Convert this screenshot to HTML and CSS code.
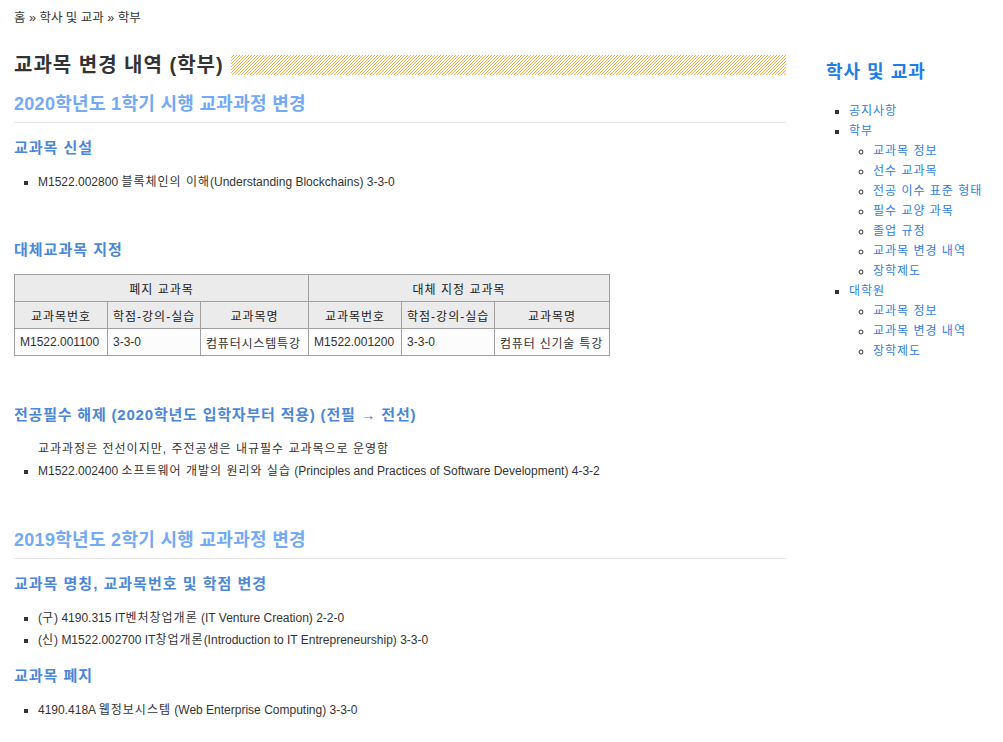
FILE: index.html
```html
<!DOCTYPE html>
<html lang="ko">
<head>
    <meta charset="UTF-8">
    <title>교과목 변경 내역 (학부)</title>
    <link rel="stylesheet" href="styles.css">
</head>
<body>
    <div class="page">
        <div class="main">
            <div class="breadcrumb">홈 &raquo; 학사 및 교과 &raquo; 학부</div>

            <h1 class="page-title"><span>교과목 변경 내역 (학부)</span><span class="stripe"></span></h1>

            <h2 class="term">2020학년도 1학기 시행 교과과정 변경</h2>

            <h3 class="sub">교과목 신설</h3>
            <ul class="items">
                <li>M1522.002800 <span class="ko">블록체인의 이해</span>(Understanding Blockchains) 3-3-0</li>
            </ul>

            <h3 class="sub gap-big">대체교과목 지정</h3>
            <table class="subst">
                <colgroup>
                    <col class="c-no">
                    <col class="c-cr">
                    <col class="c-nm">
                    <col class="c-no">
                    <col class="c-cr">
                    <col class="c-nm2">
                </colgroup>
                <tr>
                    <th colspan="3">폐지 교과목</th>
                    <th colspan="3">대체 지정 교과목</th>
                </tr>
                <tr>
                    <th>교과목번호</th>
                    <th>학점-강의-실습</th>
                    <th>교과목명</th>
                    <th>교과목번호</th>
                    <th>학점-강의-실습</th>
                    <th>교과목명</th>
                </tr>
                <tr>
                    <td>M1522.001100</td>
                    <td>3-3-0</td>
                    <td class="ko">컴퓨터시스템특강</td>
                    <td>M1522.001200</td>
                    <td>3-3-0</td>
                    <td class="ko">컴퓨터 신기술 특강</td>
                </tr>
            </table>

            <h3 class="sub gap-big long">전공필수 해제 (2020학년도 입학자부터 적용) (전필 &rarr; 전선)</h3>
            <p class="note">교과과정은 전선이지만, 주전공생은 내규필수 교과목으로 운영함</p>
            <ul class="items tight">
                <li>M1522.002400 <span class="ko">소프트웨어 개발의 원리와 실습</span> (Principles and Practices of Software Development) 4-3-2</li>
            </ul>

            <h2 class="term gap-big">2019학년도 2학기 시행 교과과정 변경</h2>

            <h3 class="sub">교과목 명칭, 교과목번호 및 학점 변경</h3>
            <ul class="items">
                <li>(<span class="ko">구</span>) 4190.315 IT<span class="ko">벤처창업개론</span> (IT Venture Creation) 2-2-0</li>
                <li>(<span class="ko">신</span>) M1522.002700 IT<span class="ko">창업개론</span>(Introduction to IT Entrepreneurship) 3-3-0</li>
            </ul>

            <h3 class="sub">교과목 폐지</h3>
            <ul class="items">
                <li>4190.418A <span class="ko">웹정보시스템</span> (Web Enterprise Computing) 3-3-0</li>
            </ul>
        </div>

        <div class="side">
            <h2 class="side-title">학사 및 교과</h2>
            <ul class="side-nav">
                <li><a href="#">공지사항</a></li>
                <li><a href="#">학부</a>
                    <ul>
                        <li><a href="#">교과목 정보</a></li>
                        <li><a href="#">선수 교과목</a></li>
                        <li><a href="#">전공 이수 표준 형태</a></li>
                        <li><a href="#">필수 교양 과목</a></li>
                        <li><a href="#">졸업 규정</a></li>
                        <li><a href="#">교과목 변경 내역</a></li>
                        <li><a href="#">장학제도</a></li>
                    </ul>
                </li>
                <li><a href="#">대학원</a>
                    <ul>
                        <li><a href="#">교과목 정보</a></li>
                        <li><a href="#">교과목 변경 내역</a></li>
                        <li><a href="#">장학제도</a></li>
                    </ul>
                </li>
            </ul>
        </div>
    </div>
</body>
</html>
```
FILE: styles.css
```css
body {
    margin: 0;
    font-family: "Liberation Sans", "Noto Sans CJK KR", sans-serif;
    font-size: 12px;
    color: #333;
    background-color: #fff;
}

/* Korean runs: widen a little to match the original Hangul metrics */
.ko {
    letter-spacing: 1px;
}

.page {
    display: flex;
    padding: 0 14px;
}

.main {
    width: 772px;
}

.side {
    margin-left: 40px;
    flex: 1;
}

.breadcrumb {
    padding-top: 10px;
    font-size: 12.5px;
    line-height: 16px;
}

.page-title {
    display: flex;
    align-items: center;
    margin: 27px 0 0;
    font-size: 20px;
    line-height: 24px;
    letter-spacing: 1px;
    color: #333;
}

.stripe {
    flex: 1;
    height: 20px;
    margin-left: 7px;
    background: repeating-linear-gradient(-45deg, #fff 0, #fff 1.4px, #f9ae42 1.4px, #f9ae42 2.12px);
}

.term {
    margin: 15px 0 0;
    padding-bottom: 6px;
    border-bottom: 1px solid #e6e6e6;
    font-size: 18px;
    line-height: 24px;
    letter-spacing: 0.3px;
    color: #73a9f5;
}

.sub {
    margin: 15px 0 0;
    font-size: 15px;
    line-height: 20px;
    letter-spacing: 1px;
    color: #4b87d6;
}

.sub.long {
    letter-spacing: 0.8px;
}

.gap-big {
    margin-top: 47px;
}

.sub.long.gap-big {
    margin-top: 49px;
}

.term.gap-big {
    margin-top: 46px;
}

.items {
    margin: 13px 0 0;
    padding-left: 24px;
    list-style: square;
}

.items li {
    line-height: 22px;
}

.items.tight {
    margin-top: 0;
}

.note {
    margin: 13px 0 0;
    padding-left: 24px;
    line-height: 22px;
    letter-spacing: 1px;
}

.subst {
    width: 596px;
    margin-top: 14px;
    border-collapse: collapse;
    table-layout: fixed;
    font-size: 12px;
}

.subst th,
.subst td {
    border: 1px solid #a0a0a0;
    height: 26px;
    padding: 0 5px;
    white-space: nowrap;
    overflow: hidden;
}

.subst th {
    background-color: #ebebeb;
    font-weight: normal;
    color: #222;
    text-align: center;
    letter-spacing: 1px;
}

.subst td {
    background-color: #fcfcfc;
    text-align: left;
}

.subst td.ko {
    letter-spacing: 0.8px;
}

.c-no { width: 93px; }
.c-cr { width: 93px; }
.c-nm { width: 108px; }
.c-nm2 { width: 115px; }

.side-title {
    margin: 60px 0 0;
    font-size: 18px;
    line-height: 24px;
    letter-spacing: 1px;
    color: #1f7de6;
}

.side-nav {
    margin: 17px 0 0;
    padding-left: 23px;
    list-style: square;
}

.side-nav ul {
    margin: 0;
    padding-left: 24px;
    list-style: circle;
}

.side-nav li {
    line-height: 20px;
}

.side-nav a {
    color: #2f80de;
    text-decoration: none;
    letter-spacing: 1px;
}
```
